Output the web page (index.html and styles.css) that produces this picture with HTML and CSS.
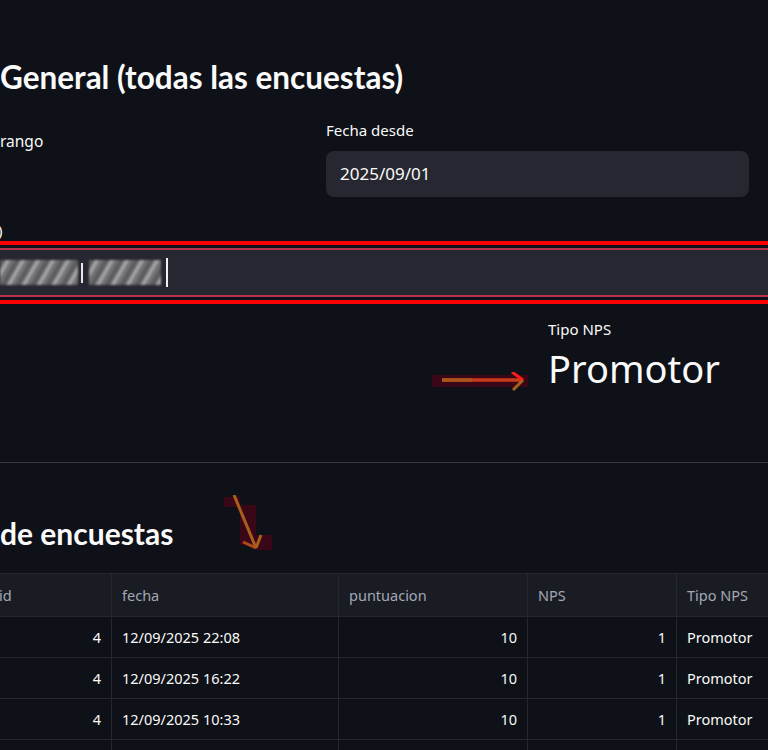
FILE: index.html
```html
<!DOCTYPE html>
<html lang="es">
<head>
  <meta charset="UTF-8">
  <title>NPS - Resumen</title>
  <link rel="stylesheet" href="styles.css">
</head>
<body>

  <main class="page">
    <!-- Titulo -->
    <h2 class="title">General (todas las encuestas)</h2>

    <!-- Filtros -->
    <section class="filters">
      <div class="filter-left">
        <p class="radio-label">rango</p>
      </div>
      <div class="filter-right">
        <label class="field-label">Fecha desde</label>
        <div class="date-input">2025/09/01</div>
      </div>
    </section>

    <label class="field-label cut-label">)</label>
    <div class="focus-mark">
      <div class="text-input">
        <span class="blur blur-a"></span>
        <span class="sep"></span>
        <span class="blur blur-b"></span>
        <span class="cursor"></span>
      </div>
    </div>

    <!-- Metrica -->
    <section class="metric-row">
      <div class="metric">
        <div class="metric-label">Tipo NPS</div>
        <div class="metric-value">Promotor</div>
      </div>
    </section>

    <hr class="divider">

    <h3 class="subtitle">de encuestas</h3>

    <!-- Tabla -->
    <div class="table-wrap">
      <table class="grid">
        <thead>
          <tr>
            <th class="c-id">id</th>
            <th class="c-fecha">fecha</th>
            <th class="c-punt">puntuacion</th>
            <th class="c-nps">NPS</th>
            <th class="c-tipo">Tipo NPS</th>
          </tr>
        </thead>
        <tbody>
          <tr>
            <td class="num">4</td>
            <td>12/09/2025 22:08</td>
            <td class="num">10</td>
            <td class="num">1</td>
            <td>Promotor</td>
          </tr>
          <tr>
            <td class="num">4</td>
            <td>12/09/2025 16:22</td>
            <td class="num">10</td>
            <td class="num">1</td>
            <td>Promotor</td>
          </tr>
          <tr>
            <td class="num">4</td>
            <td>12/09/2025 10:33</td>
            <td class="num">10</td>
            <td class="num">1</td>
            <td>Promotor</td>
          </tr>
          <tr>
            <td class="num"></td>
            <td></td>
            <td class="num"></td>
            <td class="num"></td>
            <td></td>
          </tr>
        </tbody>
      </table>
    </div>
  </main>

  <!-- Flechas de anotacion -->
  <svg class="mark mark-right" width="100" height="24" viewBox="0 0 100 24">
    <rect x="0" y="3" width="96" height="12" fill="#3a0716"/>
    <line x1="10" y1="8" x2="90" y2="8" stroke="#c83a1c" stroke-width="3.5"/>
    <line x1="10" y1="8" x2="40" y2="8" stroke="#a8561c" stroke-width="3.5"/>
    <line x1="80" y1="0" x2="91" y2="8" stroke="#ff1a1a" stroke-width="3"/>
    <line x1="81" y1="18" x2="91" y2="8" stroke="#a8601c" stroke-width="3"/>
  </svg>

  <svg class="mark mark-down" width="50" height="60" viewBox="0 0 50 60">
    <rect x="0" y="2" width="16" height="10" fill="#3a0716"/>
    <rect x="16" y="10" width="16" height="40" fill="#3a0716"/>
    <rect x="32" y="40" width="16" height="15" fill="#3a0716"/>
    <line x1="10" y1="0" x2="32" y2="53" stroke="#a8601c" stroke-width="3"/>
    <line x1="19" y1="47" x2="32" y2="53" stroke="#b04a1c" stroke-width="3"/>
    <line x1="37" y1="40" x2="32" y2="53" stroke="#a8601c" stroke-width="3"/>
  </svg>

</body>
</html>
```

FILE: styles.css
```css
/* Global */
body {
  margin: 0;
  padding: 0;
  background: #0e1117;
  color: #fafafa;
  font-family: 'Noto Sans', sans-serif;
  width: 768px;
  height: 750px;
  overflow: hidden;
  position: relative;
}

.page {
  padding: 0;
}

/* Titulos */
.title {
  margin: 0;
  padding-top: 51px;
  font-family: 'Lato', 'Noto Sans', sans-serif;
  font-size: 31.5px;
  font-weight: 700;
  line-height: 52px;
}

.subtitle {
  margin: 0;
  padding-top: 46px;
  font-family: 'Lato', 'Noto Sans', sans-serif;
  font-size: 30px;
  font-weight: 700;
  line-height: 48px;
}

/* Filtros */
.filters {
  display: grid;
  grid-template-columns: 326px 423px;
  margin-top: 16px;
}

.radio-label {
  margin: 10px 0 0;
  font-size: 15.5px;
  line-height: 24px;
}

.field-label {
  display: block;
  font-size: 15px;
  line-height: 22px;
  color: #fafafa;
}

.date-input {
  margin-top: 10px;
  height: 46px;
  line-height: 46px;
  padding: 0 14px;
  background: #262730;
  border-radius: 8px;
  font-size: 17px;
}

.cut-label {
  margin-top: 22px;
  margin-left: -2px;
}

/* Input con foco (marcado en rojo) */
.focus-mark {
  margin-left: -20px;
  border-top: 4px solid #ff0000;
  border-bottom: 4px solid #ff0000;
  padding: 3px 0;
}

.text-input {
  height: 45px;
  background: #262730;
  border-top: 2px solid #b8344c;
  border-bottom: 2px solid #b8344c;
  display: flex;
  align-items: center;
  padding-left: 20px;
}

.blur {
  display: block;
  height: 25px;
  background: repeating-linear-gradient(120deg, #5c5c5e 0 4px, #a4a4a6 6px 8px, #727274 10px 13px);
  filter: blur(0.8px);
}

.blur-a {
  width: 78px;
}

.blur-b {
  width: 72px;
  margin-left: 6px;
}

.sep {
  width: 2px;
  height: 20px;
  margin-left: 3px;
  background: #e8e8ea;
}

.cursor {
  width: 2px;
  height: 29px;
  margin-left: 5px;
  background: #f0f0f0;
}

/* Metrica */
.metric-row {
  display: flex;
  padding-left: 548px;
  margin-top: 14px;
}

.metric-label {
  font-size: 15px;
  line-height: 22px;
}

.metric-value {
  font-size: 38px;
  line-height: 56px;
}

.divider {
  margin: 66px 0 0;
  border: none;
  border-top: 1px solid #35363f;
}

/* Tabla */
.table-wrap {
  margin-top: 16px;
  margin-left: -12px;
}

.grid {
  border-collapse: collapse;
  table-layout: fixed;
  width: 830px;
  font-size: 14.5px;
}

.grid th,
.grid td {
  box-sizing: border-box;
  border: 1px solid #262730;
  padding: 0 10px;
  text-align: left;
  white-space: nowrap;
}

.grid th {
  height: 43px;
  background: #1a1c24;
  color: #a3a8b4;
  font-weight: 400;
}

.grid td {
  height: 41px;
}

.grid td.num {
  text-align: right;
}

.c-id { width: 123px; }
.c-fecha { width: 227px; }
.c-punt { width: 189px; }
.c-nps { width: 149px; }
.c-tipo { width: 142px; }

/* Anotaciones */
.mark {
  position: absolute;
}

.mark-right {
  left: 432px;
  top: 372px;
}

.mark-down {
  left: 224px;
  top: 495px;
}
```
